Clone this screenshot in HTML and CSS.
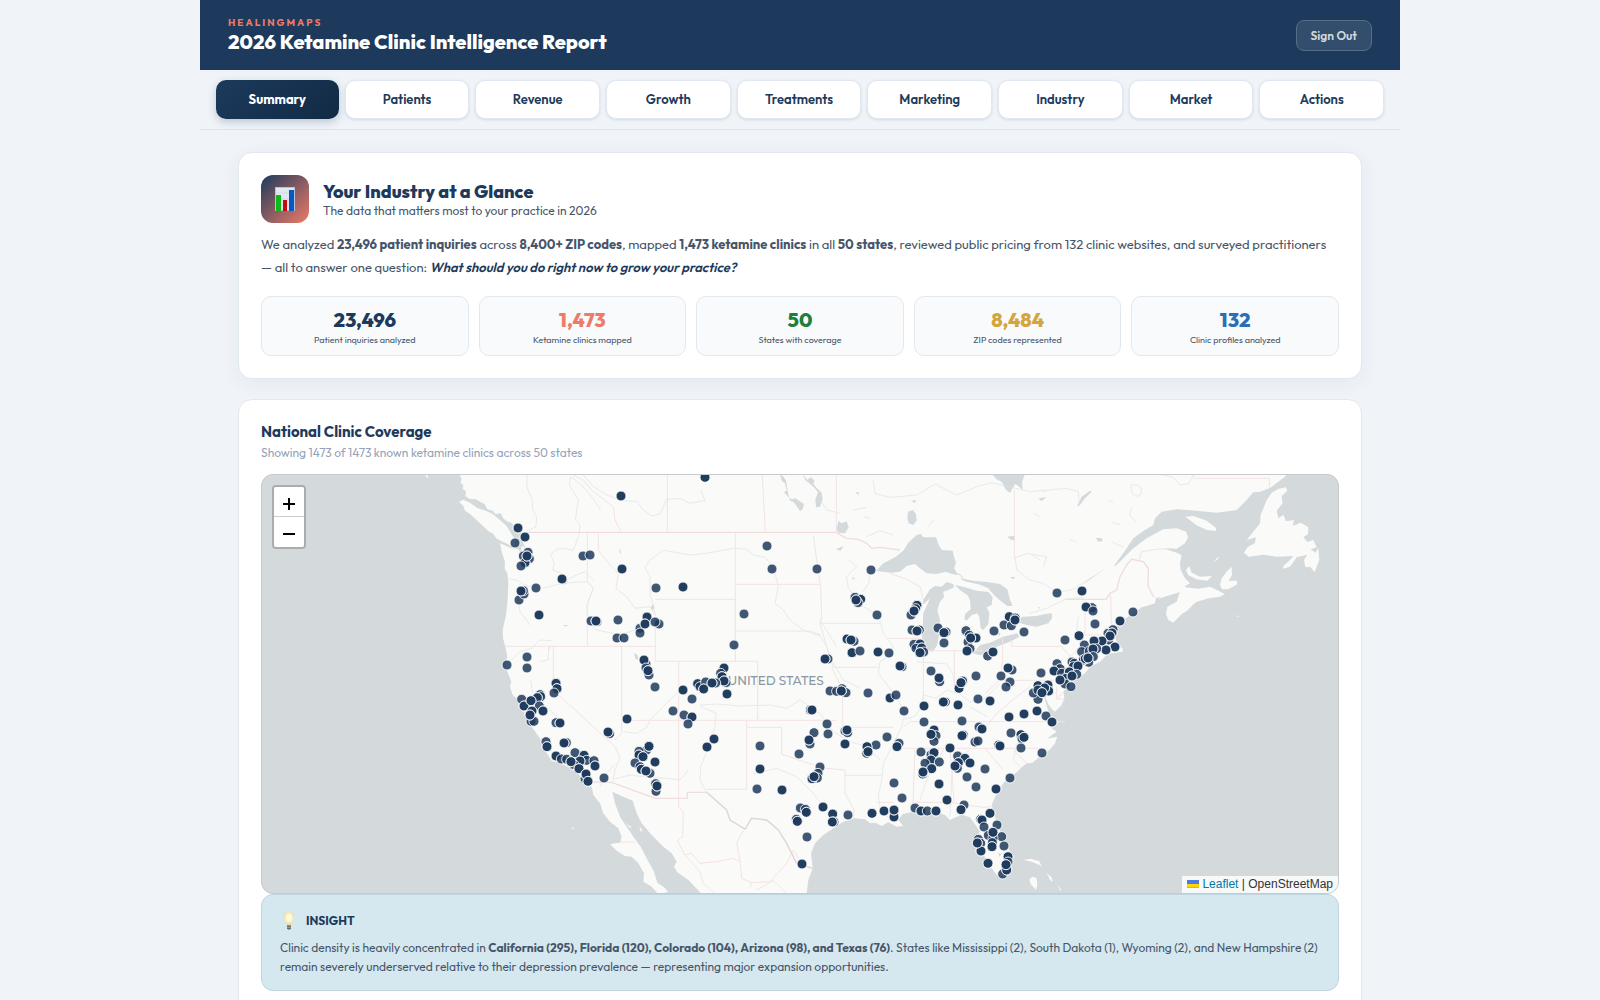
FILE: index.html
```html
<!DOCTYPE html>
<html lang="en">
<head>
    <meta charset="UTF-8">
    <meta name="viewport" content="width=device-width, initial-scale=1.0">
    <title>2026 Ketamine Clinic Intelligence Report</title>
    <link rel="stylesheet" href="styles.css">
</head>
<body>
<div class="page">
    <header class="header">
        <div>
            <div class="brand">HEALINGMAPS</div>
            <h1>2026 Ketamine Clinic Intelligence Report</h1>
        </div>
        <button type="button" class="sign-out">Sign Out</button>
    </header>

    <nav class="tabs">
        <button type="button" class="tab active">Summary</button>
        <button type="button" class="tab">Patients</button>
        <button type="button" class="tab">Revenue</button>
        <button type="button" class="tab">Growth</button>
        <button type="button" class="tab">Treatments</button>
        <button type="button" class="tab">Marketing</button>
        <button type="button" class="tab">Industry</button>
        <button type="button" class="tab">Market</button>
        <button type="button" class="tab">Actions</button>
    </nav>

    <main class="content">
        <section class="card hero">
            <div class="hero-head">
                <div class="hero-icon">
                    <svg width="20" height="24" viewBox="0 0 20 24" aria-hidden="true">
                        <rect width="20" height="24" fill="#b9c3cf"/>
                        <rect x="1" y="1" width="18" height="22" fill="#dfe9f1"/>
                        <path d="M1 6h18M1 12h18M1 18h18" stroke="#cfdce6" stroke-width="1"/>
                        <rect x="1" y="8" width="5" height="16" fill="#0fb916"/>
                        <rect x="8" y="13" width="4" height="11" fill="#c00d14"/>
                        <rect x="14" y="3" width="5" height="21" fill="#0b56c4"/>
                    </svg>
                </div>
                <div>
                    <h2>Your Industry at a Glance</h2>
                    <p class="hero-sub">The data that matters most to your practice in 2026</p>
                </div>
            </div>
            <p class="hero-text">We analyzed <strong>23,496 patient inquiries</strong> across <strong>8,400+ ZIP codes</strong>, mapped <strong>1,473 ketamine clinics</strong> in all <strong>50 states</strong>, reviewed public pricing from 132 clinic websites, and surveyed practitioners — all to answer one question: <em>What should you do right now to grow your practice?</em></p>
            <div class="stats">
                <div class="stat">
                    <div class="stat-num navy">23,496</div>
                    <div class="stat-label">Patient inquiries analyzed</div>
                </div>
                <div class="stat">
                    <div class="stat-num coral">1,473</div>
                    <div class="stat-label">Ketamine clinics mapped</div>
                </div>
                <div class="stat">
                    <div class="stat-num green">50</div>
                    <div class="stat-label">States with coverage</div>
                </div>
                <div class="stat">
                    <div class="stat-num gold">8,484</div>
                    <div class="stat-label">ZIP codes represented</div>
                </div>
                <div class="stat">
                    <div class="stat-num blue">132</div>
                    <div class="stat-label">Clinic profiles analyzed</div>
                </div>
            </div>
        </section>

        <section class="card">
            <h3>National Clinic Coverage</h3>
            <p class="card-sub">Showing 1473 of 1473 known ketamine clinics across 50 states</p>
            <div class="map">
                <svg class="map-canvas" viewBox="-564 45 3228 1254" preserveAspectRatio="xMidYMid slice" role="img" aria-label="Map of ketamine clinics">
                    <!-- land -->
                    <g class="land">
                        <path d="M28 42L35 58 31 68 40 76 38 86 48 94 46 108 60 117 78 118 90 125 104 132 112 148 128 152 137 163 152 160 160 175 170 184 184 188 195 204 212 218 215 240 226 262 214 258 214 280 205 268 185 265 150 250 155 275 165 305 164 326 172 340 175 370 173 420 168 465 158 510 159 535 166 560 172 590 165 615 172 635 184 665 180 680 188 705 205 720 220 745 225 768 240 782 248 805 270 835 285 870 305 903 330 908 355 922 385 940 400 965 425 980 430 1005 450 1030 460 1060 480 1085 505 1105 515 1130 510 1148 480 1152 500 1172 525 1188 545 1190 565 1210 582 1240 580 1265 602 1278 625 1302L655 1296 642 1282 622 1268 612 1235 590 1195 572 1160 550 1130 530 1100 510 1070 495 1030 487 995 515 1008 548 1022 560 1060 575 1090 600 1120 640 1160 665 1180 680 1205 672 1220 682 1237 715 1260 755 1302H1070L1075 1260 1088 1225 1083 1180 1095 1150 1120 1125 1150 1105 1180 1085 1215 1075 1245 1078 1260 1090 1275 1088 1296 1098 1315 1087 1340 1100 1360 1098 1345 1080 1358 1062 1390 1055 1430 1060 1470 1060 1485 1065 1500 1080 1512 1074 1535 1064 1560 1072 1580 1100 1590 1115 1572 1135 1580 1160 1600 1180 1610 1205 1625 1225 1640 1245 1665 1250 1682 1235 1685 1200 1675 1160 1660 1130 1640 1090 1632 1060 1625 1035 1640 1000 1660 970 1680 950 1700 937 1715 922 1730 910 1747 909 1775 885 1798 870 1815 850 1822 830 1790 836 1820 815 1798 800 1815 795 1802 780 1795 752 1788 730 1780 700 1796 735 1806 748 1815 755 1835 735 1843 715 1840 695 1855 675 1880 655 1905 640 1920 620 1950 605 1970 585 1985 580 2018 575 2018 562 2008 568 1995 530 1990 510 2005 490 2020 480 2050 460 2075 442 2090 438 2115 430 2118 414 2150 405 2180 390 2215 370 2185 372 2150 400 2120 418 2190 396 2205 378 2220 370 2205 355 2192 330 2190 310 2195 285 2180 278 2140 265 2180 266 2205 250 2214 232 2208 215 2180 205 2140 208 2090 235 2050 265 2000 315 1940 345 1900 372 1920 355 1990 320 2025 272 2050 235 2080 213 2110 195 2115 175 2135 155 2180 148 2240 152 2300 158 2360 150 2385 125 2410 97 2430 95 2460 84 2505 50 2510 42Z"/>
                        <path d="M27 125L40 119 60 128 82 144 108 152 128 162 150 180 170 198 182 218 196 240 194 258 180 256 160 246 140 236 128 220 118 215 105 204 80 180 60 162 45 152 40 138Z"/>
                        <path d="M2195 376L2208 382 2245 386 2280 380 2305 392 2325 402 2310 410 2280 414 2240 425 2225 438 2212 452 2195 462 2180 478 2170 488 2155 480 2148 462 2152 440 2180 425Z"/>
                        <path d="M2310 375L2315 355 2330 335 2345 320 2346 345 2336 362 2362 362 2360 374 2335 388 2316 388Z"/>
                        <path d="M2208 330L2218 318 2225 338 2250 350 2286 348 2272 362 2240 358 2215 346Z"/>
                        <path d="M2206 170L2230 168 2270 182 2298 204 2298 213 2270 210 2240 196Z"/>
                        <path d="M2508 82L2512 92 2495 108 2498 130 2480 152 2485 175 2500 164 2508 184 2532 180 2528 198 2552 188 2575 202 2574 222 2560 232 2572 246 2590 240 2600 262 2582 268 2596 278 2605 265 2608 300 2594 336 2580 320 2566 322 2562 300 2572 284 2540 292 2520 320 2500 326 2500 318 2518 302 2530 288 2480 290 2440 284 2396 290 2382 278 2392 262 2414 250 2418 232 2390 240 2410 215 2430 190 2432 165 2450 120 2465 98 2486 86Z"/>
                        <path d="M2290 308L2300 295 2310 290 2300 300ZM1900 612L1925 602 1948 600 1930 608 1910 620ZM2355 468L2368 467 2366 470ZM1748 1250L1760 1255 1762 1275 1758 1290 1742 1272 1738 1258ZM1720 1200L1742 1196 1768 1204 1776 1220 1770 1216 1745 1205ZM1790 1240L1805 1252 1808 1265 1802 1262ZM1820 1273L1835 1290 1832 1292ZM365 1099L372 1106 368 1109ZM528 1090L545 1102 540 1104ZM568 1098L578 1112 572 1115ZM-75 45L-67 46 -66 56Z"/>
                    </g>

                    <!-- lakes, bays and sounds -->
                    <g class="water">
                        <path d="M1278 333L1300 310 1335 292 1360 272 1375 248 1400 225 1412 222 1420 232 1458 232 1466 255 1475 270 1508 272 1512 290 1518 308 1512 325 1525 345 1505 342 1488 335 1460 342 1430 340 1410 325 1395 312 1370 318 1350 335 1325 338Z"/>
                        <path d="M1420 420L1440 388 1455 378 1475 380 1490 366 1510 372 1512 382 1495 390 1480 395 1482 412 1470 425 1462 450 1470 480 1468 520 1462 555 1448 575 1430 572 1415 550 1418 500 1420 460 1440 415 1418 435Z"/>
                        <path d="M1515 375L1545 382 1580 392 1615 396 1628 412 1625 435 1610 442 1618 458 1615 492 1600 510 1592 505 1588 470 1582 460 1565 465 1550 482 1543 478 1545 462 1562 448 1560 420 1552 405 1530 390Z"/>
                        <path d="M1530 355L1570 362 1610 366 1650 372 1672 388 1680 420 1688 438 1672 438 1655 425 1635 408 1615 385 1590 374 1545 364Z"/>
                        <path d="M1570 580L1590 555 1620 548 1660 530 1702 520 1708 530 1680 545 1645 558 1610 578 1590 586Z"/>
                        <path d="M1700 478L1720 470 1760 468 1785 462 1805 460 1806 475 1795 490 1760 500 1730 495 1708 488Z"/>
                        <path d="M1625 42L1725 42 1716 65 1718 90 1705 78 1695 72 1680 98 1668 90 1655 65 1640 58Z"/>
                        <path d="M990 42L995 62 1005 70 1010 92 1002 96 1014 110 1025 118 1036 115 1044 120 1062 132 1058 148 1050 153 1040 138 1030 125 1020 122 1014 100 1008 62 1000 50ZM1058 42L1072 60 1082 52 1094 62 1090 72 1100 84 1115 98 1118 118 1110 140 1098 142 1096 118 1104 96 1090 80 1066 60Z"/>
                        <path d="M1160 208L1165 182 1175 190 1190 184 1196 202 1185 220 1165 218ZM1374 155L1388 150 1398 162 1400 182 1390 195 1376 190 1372 175ZM1158 268L1180 258 1172 272ZM1204 352L1214 353 1212 360ZM1880 140L1895 110 1920 92 1925 95 1905 115 1890 135ZM1938 234L1955 234 1958 243 1945 245ZM1640 516L1652 520 1648 528ZM552 578L562 585 566 600 556 596ZM602 442L610 432 614 445 606 452ZM340 495L355 495 345 500ZM298 556L300 565 295 568ZM510 265L514 282 508 276ZM1645 1178L1655 1182 1648 1190Z"/>
                        <path d="M1765 440L1770 442 1768 448ZM1215 98L1228 96 1225 104ZM1384 122L1398 120 1395 130ZM1672 230L1692 228 1695 242 1680 238ZM1765 115L1788 112 1775 124ZM1680 352L1696 350 1690 358Z"/>
                    </g>

                    <!-- rivers and small lakes -->
                    <g class="river">
                        <path d="M232 45L230 80 246 118 248 150 260 170 258 200 228 214"/>
                        <path d="M362 50L358 75 385 120 376 180 390 195 388 220 376 255 368 272 345 265 320 268 302 282 312 310 308 330 340 342 346 362 380 345 405 335 432 362"/>
                        <path d="M362 50L395 75 425 110 452 150M400 45L430 80 470 105 520 122 560 124 580 150 605 168 630 162 650 118 690 115 720 130 765 122 752 90"/>
                        <path d="M175 356L200 360 218 372 250 385 280 384 336 370 412 365 430 385 410 440 415 480 438 510 480 518 515 524 560 508 615 488"/>
                        <path d="M616 465L600 400 600 350 585 322 600 300 640 270 690 280 730 285 780 278 850 265 890 268 910 285 945 292 960 310 975 340 985 380 975 430 1000 450 1020 480 1060 510 1110 528 1130 560 1145 600 1180 660 1230 684"/>
                        <path d="M1195 300L1220 320 1190 350 1195 385 1240 440 1285 465 1300 520 1330 560 1320 585 1290 605 1285 640 1315 680 1345 720 1365 760 1355 800 1340 830 1320 870 1300 910 1295 960 1285 1010 1290 1040 1320 1080"/>
                        <path d="M1365 778L1395 768 1415 740 1420 705 1460 715 1490 690 1530 702 1560 726 1605 715 1650 670"/>
                        <path d="M750 735L800 732 870 738 960 735 1010 745 1050 720 1110 760 1150 815 1200 845 1250 860 1290 900"/>
                        <path d="M910 942L980 925 1040 950 1090 1000 1120 1040M520 815L560 820 590 802 600 780 640 740 690 690M490 958L540 945 580 950 650 955 690 960 715 930"/>
                        <path d="M750 738L798 760 795 800 768 880 752 920 750 960 770 998M1110 480L1160 560M450 980L470 940 495 912"/>
                        <path d="M205 420L210 455 240 495M185 600L210 575 245 565 270 540 305 542M270 605L295 600 296 565M242 660L248 700 300 750 340 785"/>
                        <path d="M1400 605L1490 612 1510 645 1515 700M1560 870L1510 900 1505 960 1500 1070M1410 1020L1430 960 1470 890 1490 850"/>
                        <path d="M1270 62L1275 100 1320 112 1400 105 1455 72 1520 105 1580 80 1625 68 1740 95 1850 85 1885 95 1888 130"/>
                        <path d="M1695 290L1700 330 1740 360 1780 370 1820 398 1870 388 1905 365 1960 330M1740 460L1790 445 1845 418 1900 412"/>
                        <path d="M1690 295L1730 280 1790 290 1780 320M1330 225L1290 212 1250 230M1110 120L1130 150 1170 160"/>
                        <path d="M2045 75C2070 68 2085 95 2066 108 2040 112 2042 78 2045 75M2045 140L2040 165 2060 190M1985 245L2020 262M1885 470L1880 510 1890 560 1850 600"/>
                        <path d="M1700 850L1690 900 1710 920M1350 300L1385 268M1435 200L1452 178M1560 740L1610 770"/>
                        <path d="M1772 90L1790 96M1750 160L1770 170M1860 238L1880 246M1975 122L1990 126M1988 188L2012 194M1742 282L1770 300M1210 150L1250 142M1240 170L1260 175"/>
                    </g>

                    <!-- state and country borders -->
                    <g class="border">
                        <path class="country" d="M228 217H1158L1190 235 1225 238 1250 250 1265 265 1290 262 1320 266 1350 270M1525 340L1540 355M1845 418H1968L1980 400 2000 390 2010 350 2030 315 2045 298 2080 305 2095 325 2094 378 2112 412"/>
                        <path class="country" d="M425 965L487 968 616 1015H712V997H770"/>
                        <path d="M412 217V365M445 217V272L480 315 505 340 498 385 510 395 530 410 555 445 600 440 616 465V605M412 365L430 385 412 430V559M165 559H616M310 559V690L495 860 510 892 495 930 487 968M515 559V820L495 840"/>
                        <path d="M616 418H856V604M616 604H923V660M686 604V1040M856 217V604M856 373H1112M856 513H1080L1112 525M923 660V781M515 781H1160M890 781V988H770M890 802H995V882L1060 905 1130 925 1185 930V1000L1212 1050 1210 1075"/>
                        <path d="M937 45L946 217M652 45V217M1159 45V217M1090 225L1100 300 1112 380 1115 470 1110 490 1130 560 1150 622H1285M1112 490H1290M1315 535H1420M1145 622L1178 690V805M1178 802H1330M1185 946H1295M1360 865H1770M1360 802L1380 785H1845M1395 865L1388 1050M1500 865L1512 1020 1500 1040M1395 1027H1500L1600 1042 1625 1040"/>
                        <path d="M1420 572H1600M1420 572V720M1513 572V690M1658 535V600L1650 660 1605 700M1685 540V559H1835L1860 590M1658 661H1830M1905 420V525H1985M1982 405L1985 525M1240 395L1258 365V340M1320 340L1370 358 1410 380 1420 420M1693 90V290M1600 810L1640 760 1700 710 1740 680M1280 1027H1330M1605 865L1660 930M1690 870L1730 910"/>
                        <path d="M2140 45L2170 52 2190 75 2215 72 2230 45 2232 55H2458V85M2065 305L2075 275 2120 268 2165 265M370 45L400 60 425 90 450 110 490 140 495 180 515 217M510 1146H555M1820 680V720M1835 700L1822 717H1845"/>
                        <path d="M686 1040L700 1055 698 1130 682 1142 705 1185 750 1235 760 1270 795 1300M880 1110L860 1150 870 1200 875 1255 905 1268 900 1285M705 1185L725 1180 750 1210 800 1205 850 1195 870 1205M905 1268L960 1265 1010 1210 1030 1170 1055 1210 1080 1225M920 1290L970 1262 1010 1300"/>
                        <path class="mexico" d="M770 997L830 1050 840 1080 885 1107 905 1075 950 1080 985 1110 1010 1150 1040 1210 1088 1225"/>
                    </g>

                    <text class="map-label" x="833" y="674">UNITED STATES</text>
                    <g class="dots" id="dots"></g>
                </svg>

                <div class="zoom">
                    <button type="button" aria-label="Zoom in"><svg width="14" height="14" viewBox="0 0 14 14"><path d="M7 1v12M1 7h12"/></svg></button>
                    <button type="button" aria-label="Zoom out"><svg width="14" height="14" viewBox="0 0 14 14"><path d="M1 7h12"/></svg></button>
                </div>
                <div class="attribution">
                    <a href="https://leafletjs.com"><svg width="12" height="8" viewBox="0 0 12 8" aria-hidden="true"><path fill="#4c7be1" d="M0 0h12v4H0z"/><path fill="#ffd500" d="M0 4h12v3H0z"/><path fill="#e0bc00" d="M0 7h12v1H0z"/></svg> Leaflet</a> <span>|</span> OpenStreetMap
                </div>
            </div>

            <div class="insight">
                <div class="insight-head">
                    <svg width="18" height="20" viewBox="0 0 18 20" aria-hidden="true">
                        <defs>
                            <radialGradient id="glow" cx="50%" cy="45%" r="55%">
                                <stop offset="0" stop-color="#fffef5"/>
                                <stop offset="0.6" stop-color="#fdf3c8"/>
                                <stop offset="1" stop-color="#ecd382"/>
                            </radialGradient>
                        </defs>
                        <path fill="url(#glow)" d="M9 1c-3 0-5 2.200-5 5 0 3 2.200 4.500 3 8h4c.8-3.500 3-5 3-8 0-2.800-2-5-5-5z"/>
                        <path fill="#9a9a97" d="M7 14h4v3l-1 2H8l-1-2z"/>
                        <path stroke="#6d6d6d" d="M7 15.500h4M7 17.500h4"/>
                    </svg>
                    <span>INSIGHT</span>
                </div>
                <p>Clinic density is heavily concentrated in <strong>California (295), Florida (120), Colorado (104), Arizona (98), and Texas (76)</strong>. States like Mississippi (2), South Dakota (1), Wyoming (2), and New Hampshire (2) remain severely underserved relative to their depression prevalence — representing major expansion opportunities.</p>
            </div>
        </section>
    </main>
</div>
<script src="script.js"></script>
</body>
</html>
```
FILE: styles.css
```css
* {
    box-sizing: border-box;
}
body {
    font-family: Outfit, Lato, sans-serif;
    background-color: #f0f4f9;
    color: #475569;
    margin: 0;
}
h1, h2, h3, p {
    margin: 0;
}
button {
    font-family: inherit;
    cursor: pointer;
}
.page {
    max-width: 1200px;
    margin: 0 auto;
}

/* header */
.header {
    display: flex;
    justify-content: space-between;
    align-items: center;
    height: 70px;
    padding: 0 28px;
    background: #1d3a5c;
}
.brand {
    font-size: 10px;
    line-height: 14px;
    font-weight: 700;
    letter-spacing: 2px;
    color: #ee7b68;
}
.header h1 {
    font-size: 20px;
    line-height: 24px;
    font-weight: 800;
    color: #fff;
}
.sign-out {
    height: 31px;
    padding: 0 14px;
    font-size: 12px;
    font-weight: 600;
    color: #d2d8de;
    background: #334e6c;
    border: 1px solid #566d86;
    border-radius: 8px;
}

/* tabs */
.tabs {
    display: flex;
    gap: 6px;
    padding: 10px 16px;
    border-bottom: 1px solid #dfe5ec;
}
.tab {
    flex: 1 1 0;
    height: 39px;
    padding: 0 4px 1px;
    font-size: 13px;
    font-weight: 600;
    color: #1d3a5c;
    background: #fff;
    border: 1px solid #e2e8f0;
    border-radius: 10px;
    box-shadow: 0 1px 3px rgba(29, 58, 92, 0.15);
}
.tab.active {
    font-weight: 700;
    color: #fff;
    background: linear-gradient(135deg, #1d3a5c, #112a45);
    border: none;
    box-shadow: 0 3px 8px rgba(29, 58, 92, 0.25);
}

/* cards */
.content {
    padding: 22px 38px;
}
.card {
    margin-bottom: 20px;
    padding: 22px;
    background: #fff;
    border: 1px solid #e2e8ef;
    border-radius: 14px;
}
.hero {
    box-shadow: 0 4px 20px rgba(29, 58, 92, 0.06);
}
.hero-head {
    display: flex;
    align-items: center;
    gap: 14px;
    margin-bottom: 10px;
}
.hero-icon {
    display: flex;
    align-items: center;
    justify-content: center;
    width: 48px;
    height: 48px;
    border-radius: 12px;
    background: linear-gradient(135deg, #1d3a5c, #ee7b68);
}
.hero h2 {
    padding-top: 2px;
    font-size: 18px;
    line-height: 22px;
    font-weight: 800;
    color: #1d3a5c;
}
.hero-sub {
    font-size: 12px;
    line-height: 16px;
}
.hero-text {
    font-size: 13px;
    line-height: 23px;
}
.hero-text em {
    font-weight: 600;
    color: #1d3a5c;
}
.stats {
    display: grid;
    grid-template-columns: repeat(5, 1fr);
    gap: 10px;
    margin-top: 17px;
}
.stat {
    padding: 10px;
    height: 60px;
    text-align: center;
    background: #f8fafc;
    border: 1px solid #e2e8ef;
    border-radius: 10px;
}
.stat-num {
    font-size: 20px;
    line-height: 26px;
    font-weight: 800;
}
.stat-label {
    font-size: 9px;
    line-height: 13px;
}
.navy { color: #1d3a5c; }
.coral { color: #ee7b68; }
.green { color: #1d7f3e; }
.gold { color: #d4a53c; }
.blue { color: #2b6fb5; }

.card h3 {
    margin-bottom: 1px;
    font-size: 15px;
    line-height: 20px;
    font-weight: 700;
    color: #1d3a5c;
}
.card-sub {
    margin-bottom: 11px;
    font-size: 12px;
    line-height: 20px;
    color: #94a3b8;
}

/* map */
.map {
    position: relative;
    height: 420px;
    overflow: hidden;
    background: #d4d9dc;
    border: 1px solid #c6cacd;
    border-radius: 12px;
}
.map-canvas {
    display: block;
    width: 100%;
    height: 100%;
}
.land {
    fill: #fafaf8;
}
.water {
    fill: #d4d9dc;
}
.river {
    fill: none;
    stroke: #dde2e4;
    stroke-width: 2;
}
.border {
    fill: none;
    stroke: #f4e3e4;
    stroke-width: 3;
}
.border .country {
    stroke: #f1dcde;
    stroke-width: 4;
}
.border .mexico {
    stroke: #ddd4d6;
    stroke-width: 4;
}
.map-label {
    font-family: Montserrat, "Open Sans", sans-serif;
    font-size: 36px;
    font-weight: 500;
    fill: #8696a2;
}
.dots circle {
    fill: #1d3a5c;
    fill-opacity: 0.85;
    stroke: #fff;
    stroke-width: 3;
    stroke-opacity: 0.85;
}
.zoom {
    position: absolute;
    top: 10px;
    left: 10px;
    border: 2px solid #a9adb0;
    border-radius: 4px;
    overflow: hidden;
}
.zoom button {
    display: flex;
    align-items: center;
    justify-content: center;
    width: 30px;
    height: 30px;
    padding: 4px 0 0;
    background: #fff;
    border: none;
}
.zoom button:first-child {
    border-bottom: 1px solid #ccc;
}
.zoom path {
    stroke: #000;
    stroke-width: 2;
}
.attribution {
    position: absolute;
    right: 0;
    bottom: 0;
    padding: 0 5px;
    font-family: "Liberation Sans", Arial, sans-serif;
    font-size: 12px;
    line-height: 17px;
    color: #333;
    background: rgba(255, 255, 255, 0.8);
}
.attribution a {
    color: #0078a8;
    text-decoration: none;
}

/* insight */
.insight {
    padding: 16px 18px 14px;
    background: #d5e8ef;
    border: 1px solid #bfd6e0;
    border-radius: 12px;
}
.insight-head {
    display: flex;
    align-items: center;
    gap: 8px;
    margin-bottom: 7px;
    font-size: 12px;
    line-height: 20px;
    font-weight: 700;
    color: #1d3a5c;
}
.insight p {
    font-size: 12px;
    line-height: 19px;
}
```
FILE: script.js
```js
// clinic dots grouped by tile, three units to a screen pixel; a third value of 2 means stacked clinics
const tiles = [
    { at: [0, 0], dots: [
        [765,52,2],[513,108,2],[195,249],[204,204,2],[225,231,2],[234,277],[220,288],[238,296],[225,308,2],[213,318],[231,288,2],
        [399,288],[420,285],[516,327,2],[338,359],[336,357,2],[258,384],[618,384],[699,381,2],[207,420],[222,402],[220,392],[213,393,2],
        [267,465,2],[423,483],[441,485],[438,483,2],[504,480],[591,471,2],[570,505],[585,492,2],[627,492],[615,486],[570,519],
        [501,534],[522,534],[882,462],[852,555],[231,591],[231,624],[171,615],[588,612],[582,600,2],[597,645],[588,624],[594,632,2],
        [615,681],[318,670,2],[321,686,2],[312,699],[822,624,2],[812,640],[816,650,2],[828,668],[822,663,2],[743,671,2],[750,680],
        [767,666],[797,669],[786,669,2],[761,687,2],[699,690,2],[831,702,2],[726,717]
    ] },
    { at: [0, 660], dots: [
        [215,58],[222,78,2],[270,44,2],[272,50],[262,53,2],[243,62,2],[268,78],[279,93,2],[246,93,2],[243,124],[252,124],[240,105,2],
        [318,128],[330,129,2],[531,117,2],[479,161],[474,156,2],[288,185],[291,200,2],[349,188],[342,189,2],[318,228,2],[334,237],
        [350,238],[375,218],[402,226,2],[410,241],[390,243,2],[372,254],[363,245,2],[387,266,2],[432,242],[435,258,2],[405,296],
        [408,284],[408,282,2],[414,304,2],[462,294],[669,93],[702,105],[726,111,2],[714,132],[792,177,2],[771,201,2],
        [590,210],[597,199,2],[567,214],[567,225,2],[579,230,2],[555,249],[615,246,2],[570,260],[574,268,2],[600,280],[588,273,2],
        [618,334],[617,311],[621,318,2],[930,198],[930,267,2],[921,327]
    ] },
    { at: [870, 0], dots: [
        [81,258],[96,327],[231,327],[393,330],[345,412],[362,418,2],[354,428],[348,420,2],[411,465],[531,436,2],[513,465],[527,446],
        [522,453,2],[516,510],[538,510],[531,513,2],[594,504],[618,516],[612,518,2],[612,549],[678,512],[688,526],[708,534,2],
        [684,546],[692,534,2],[690,566],[681,573,2],[762,513],[792,495],[808,470,2],[814,497],[826,474],[825,480,2],[852,516],
        [321,537,2],[342,544],[333,540,2],[336,578,2],[360,573],[414,576,2],[447,579],[264,597],[255,597,2],[522,553],[540,552,2],
        [528,565],[545,564,2],[551,576],[540,578,2],[743,588],[759,576,2],[486,620],[480,618,2],[573,633],[599,665],[597,654,2],
        [668,663],[657,685,2],[663,668,2],[708,648],[783,648],[816,630],[804,624,2],[810,666],[798,681],[270,693],[290,694],
        [306,686],[318,698],[304,693,2],[384,699],[450,714,2],[468,705]
    ] },
    { at: [870, 660], dots: [
        [616,66],[610,66,2],[552,78,2],[654,75,2],[714,57],[750,63,2],[894,58],[492,93],[552,126],[666,123],[211,90],[216,90,2],
        [261,132],[264,162],[222,158],[210,192],[207,180,2],[177,222],[315,153],[323,158],[321,150,2],[315,192,2],[441,171],
        [408,195],[381,200,2],[380,220],[384,215,2],[477,190],[471,200,2],[582,150,2],[588,167],[582,184],[573,163,2],[670,165],
        [666,167,2],[717,141],[726,147,2],[705,186],[714,183],[630,204,2],[543,216],[573,224],[582,218,2],[573,240,2],[555,250],
        [598,246],[575,266,2],[548,282],[549,276,2],[653,228],[675,235,2],[690,249,2],[655,248,2],[652,265],[645,258,2],[681,291],
        [735,267],[708,321],[768,327,2],[810,294],[807,111,2],[852,102,2],[891,93,2],[918,108],[936,126,2],[813,159],[843,164,2],
        [846,176],[852,172,2],[843,204],[776,195],[780,198,2],[906,219],[240,261],[234,280],[232,294],[216,296,2],[222,290,2],
        [126,330,2],[462,309],[486,354],[597,312,2],[621,360,2],[672,375],[663,389,2],[181,384],[196,388],[199,397,2],[169,418],
        [172,424,2],[249,381,2],[278,402,2],[282,426],[277,426,2],[324,405],[201,471],[186,552,2],[396,400,2],[432,393,2],
        [462,411,2],[462,390,2],[525,384],[543,393,2],[562,393],[588,393,2],[750,400,2],[722,418],[726,420,2],[732,441],[771,435],
        [745,466],[785,470],[759,475],[759,457,2],[792,498],[757,488],[756,500,2],[715,478],[722,490],[723,513,2],[712,489,2],
        [744,550,2],[804,530,2],[804,546],[788,582],[800,570,2],[798,554,2]
    ] },
    { at: [1740, 0], dots: [
        [81,399],[156,393,2],[186,443],[168,441,2],[189,453],[195,492],[309,456],[270,483,2],[105,540],[147,527,2],[249,509],
        [234,520],[246,519,2],[236,540],[240,528,2],[216,543,2],[255,561,2],[228,570,2],[192,543,2],[163,555],[155,575],[178,573],
        [200,566],[189,567,2],[190,590],[176,607],[160,600,2],[166,596],[174,594,2],[126,606],[133,610],[130,620],[144,618,2],
        [81,611],[90,626],[72,633,2],[33,639],[95,640],[118,636,2],[140,643],[108,655,2],[126,648,2],[105,672],[123,680],[90,660,2],
        [54,675,2],[24,677,2],[10,699],[56,693,2],[44,684,2],[24,690],[36,698,2]
    ] }
];

const layer = document.getElementById('dots');

function addDot(x, y) {
    const dot = document.createElementNS('http://www.w3.org/2000/svg', 'circle');
    dot.setAttribute('cx', x);
    dot.setAttribute('cy', y);
    dot.setAttribute('r', 15);
    layer.appendChild(dot);
}

tiles.forEach(function(tile) {
    tile.dots.forEach(function(dot) {
        const count = dot[2] || 1;
        for (let i = 0; i < count; i++) {
            addDot(tile.at[0] + dot[0], tile.at[1] + dot[1]);
        }
    });
});
```
